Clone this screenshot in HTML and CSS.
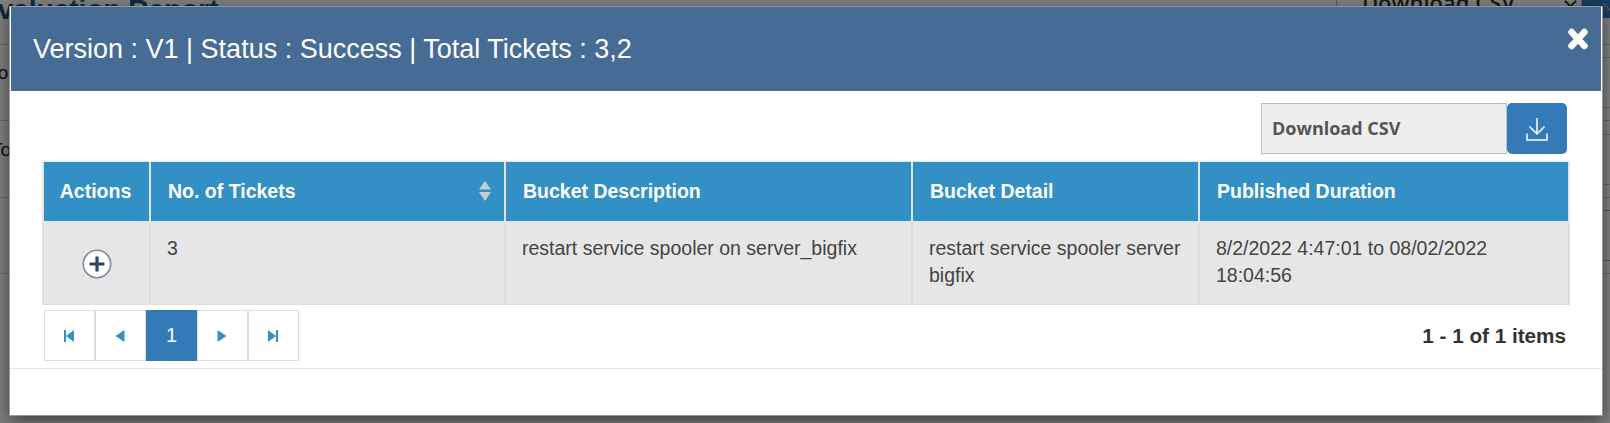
FILE: index.html
```html
<!DOCTYPE html>
<html lang="en">
<head>
<meta charset="utf-8">
<title>Evaluation Report</title>
<link rel="stylesheet" href="styles.css">
</head>
<body>
<div class="page">
  <div class="page-top">
    <h1 class="page-title">Evaluation Report</h1>
    <div class="page-tools">
      <div class="page-select">Download CSV<span class="page-chevron"></span></div>
      <div class="page-btn">
        <svg width="28" height="32" viewBox="0 0 28 32" fill="none" stroke="#9fb0c0" stroke-width="1.500"><path d="M21 17L28 24"/></svg>
      </div>
    </div>
  </div>
  <div class="page-rows">
    <div class="page-row">
      <span class="page-label page-label-a">Port</span>
      <div class="page-cell"><span class="page-cell-chevron"></span></div>
    </div>
    <div class="page-gap"></div>
    <div class="page-row">
      <span class="page-label page-label-b">Total</span>
      <div class="page-cell"><span class="page-cell-chevron"></span></div>
    </div>
    <div class="page-row page-row-last">
      <span class="page-label"></span>
      <div class="page-cell page-cell-blue"></div>
    </div>
  </div>
</div>
<div class="backdrop"></div>
<div class="modal">
  <header class="modal-head">
    <h2 class="modal-title">Version : V1 | Status : Success | Total Tickets : 3,2</h2>
    <button class="close" aria-label="Close">
      <svg width="20" height="22" viewBox="0 0 20 22" fill="none" stroke="#fff" stroke-width="6.400" stroke-linecap="round"><path d="M3.500 4L16.500 18M16.500 4L3.500 18"/></svg>
    </button>
  </header>
  <div class="modal-body">
    <div class="toolbar">
      <div class="csv-field">Download CSV</div>
      <button class="csv-btn" aria-label="Download">
        <svg width="24" height="26" viewBox="0 0 24 26" fill="none" stroke="#fff" stroke-width="1.500">
          <path d="M12 2V18M4.500 10.500L12 18L19.500 10.500"/>
          <path d="M2 17.500V24H22V17.500"/>
        </svg>
      </button>
    </div>
    <table class="grid">
      <colgroup>
        <col class="c1"><col class="c2"><col class="c3"><col class="c4"><col class="c5">
      </colgroup>
      <thead>
        <tr>
          <th class="center">Actions</th>
          <th>
            <div class="th-sort">No. of Tickets
              <svg width="14" height="20" viewBox="0 0 14 20"><path d="M7 0L13 8.500H1Z" fill="#c4ccd0"/><path d="M7 20L13 11H1Z" fill="#c4ccd0"/></svg>
            </div>
          </th>
          <th>Bucket Description</th>
          <th>Bucket Detail</th>
          <th>Published Duration</th>
        </tr>
      </thead>
      <tbody>
        <tr>
          <td class="center icon-cell">
            <svg width="30" height="30" viewBox="0 0 30 30"><circle cx="15" cy="15" r="13.700" fill="#fff" stroke="#7b8da3" stroke-width="1.600"/><path d="M15 7.500V22.500M7.500 15H22.500" stroke="#2f4563" stroke-width="3.200"/></svg>
          </td>
          <td>3</td>
          <td>restart service spooler on server_bigfix</td>
          <td>restart service spooler server bigfix</td>
          <td>8/2/2022 4:47:01 to 08/02/2022 18:04:56</td>
        </tr>
      </tbody>
    </table>
    <div class="pager-row">
      <nav class="pager">
        <a class="pg"><svg width="12" height="12" viewBox="0 0 12 12"><path d="M0 0H2V12H0ZM10 0V12L2 6Z"/></svg></a>
        <a class="pg"><svg width="12" height="12" viewBox="0 0 12 12"><path d="M9.500 0V12L.5 6Z"/></svg></a>
        <a class="pg active">1</a>
        <a class="pg"><svg width="12" height="12" viewBox="0 0 12 12"><path d="M.5 0V12L9.500 6Z"/></svg></a>
        <a class="pg"><svg width="12" height="12" viewBox="0 0 12 12"><path d="M8 0H10V12H8ZM0 0V12L8 6Z"/></svg></a>
      </nav>
      <div class="pager-info">1 - 1 of 1 items</div>
    </div>
  </div>
  <footer class="modal-foot"></footer>
</div>
</body>
</html>
```
FILE: styles.css
```css
* { box-sizing: border-box; }
html, body { margin: 0; height: 423px; overflow: hidden; }
body { background: #fff; font-family: "Liberation Sans", Arial, sans-serif; position: relative; }

.page { height: 423px; overflow: hidden; }
.page-top { height: 45px; display: flex; justify-content: space-between; border-bottom: 1px solid #ccc; }
.page-title { margin: -10px 0 0 -21px; font-size: 28px; line-height: 40px; font-weight: 700; color: #0f5a84; white-space: nowrap; }
.page-tools { display: flex; height: 44px; margin-top: -14px; }
.page-select { width: 246px; height: 36px; border: 1px solid #bbb; padding: 0 0 0 25px; font: 600 22px/30px "Open Sans", sans-serif; color: #333; position: relative; }
.page-chevron { position: absolute; right: 6px; top: 10px; width: 9px; height: 9px; border-right: 2px solid #333; border-bottom: 2px solid #333; transform: rotate(45deg); }
.page-btn { width: 28px; height: 32px; background: #2f7cc1; }
.page-btn svg { display: block; }
.page-rows { display: flex; flex-direction: column; }
.page-row { height: 76px; border-bottom: 1px solid #ccc; display: flex; justify-content: space-between; align-items: flex-start; }
.page-row-last { border-bottom-color: #ccc; }
.page-gap { height: 1px; }
.page-label { font-size: 19px; line-height: 56px; color: #222; white-space: nowrap; }
.page-label-a { margin-left: -15px; }
.page-label-b { margin-left: -9px; }
.page-cell { width: 28px; height: 51px; margin-top: 12px; border-top: 1px solid #ccc; border-bottom: 1px solid #ccc; position: relative; }
.page-cell-blue { border-color: #8fb3d0; }
.page-cell-chevron { position: absolute; left: 5px; top: 16px; width: 8px; height: 8px; border-right: 2px solid #222; border-bottom: 2px solid #222; transform: rotate(45deg); }

.backdrop { position: absolute; inset: 0; background: rgba(0, 0, 0, .5); }

.modal { position: absolute; left: 9px; top: 6px; width: 1594px; height: 410px; background: #fff; border: 1px solid rgba(0, 0, 0, .4); box-shadow: 0 5px 15px rgba(0, 0, 0, .5); display: flex; flex-direction: column; }
.modal-head { height: 84px; flex: none; margin: 0 0 0 1px; width: 1590px; background: #466b94; color: #fff; display: flex; justify-content: space-between; padding: 0 13px 0 22px; }
.modal-title { margin: 27px 0 0; font-size: 27px; line-height: 30px; font-weight: 400; }
.close { background: none; border: 0; padding: 0; width: 20px; height: 22px; margin-top: 21px; }
.close svg { display: block; }

.modal-body { flex: none; padding: 12px 33px 0 32px; }
.toolbar { display: flex; justify-content: flex-end; height: 51px; margin-right: 2px; margin-bottom: 7px; }
.csv-field { width: 246px; height: 51px; background: #eee; border: 1px solid #a9c4d0; padding: 0 10px; font: 700 18px/49px "Open Sans", sans-serif; color: #555; }
.csv-btn { width: 60px; height: 51px; background: #337ab7; border: 0; border-radius: 5px; padding: 0; display: flex; align-items: center; justify-content: center; }

.grid { width: 1526px; table-layout: fixed; border-collapse: collapse; font-size: 19.5px; color: #444; }
.c1 { width: 107px; } .c2 { width: 355px; } .c3 { width: 407px; } .c4 { width: 287px; } .c5 { width: 370px; }
.grid th { height: 60px; background: #3290c4; color: #fff; font-size: 19.5px; font-weight: 700; text-align: left; padding: 0 17px; border: 2px solid #e0e6e9; border-width: 1px 2px 2px 2px; }
.grid td { height: 83px; background: #e6e6e6; border: 2px solid #dedede; border-width: 0 2px 1px; vertical-align: top; padding: 12.5px 16px 0; line-height: 27px; }
.grid .center { text-align: center; padding-left: 0; padding-right: 0; }
.grid th.center { padding-right: 2px; }
.grid .icon-cell { vertical-align: middle; padding-top: 2px; }
.icon-cell svg { display: block; margin: 0 auto; }
.th-sort { display: flex; justify-content: space-between; align-items: center; margin-right: -5px; }

.pager-row { display: flex; justify-content: space-between; align-items: center; margin-top: 5px; padding-left: 2px; }
.pager { display: flex; }
.pg { width: 51px; height: 51px; border: 1px solid #ddd; display: flex; align-items: center; justify-content: center; background: #fff; color: #fff; font-size: 20px; }
.pg svg { fill: #3290c4; }
.pg.active { background: #337ab7; border-color: #337ab7; }
.pager-info { font-size: 20.7px; font-weight: 700; color: #333; margin-right: 3px; }

.modal-foot { margin-top: 7px; border-top: 1px solid #e5e5e5; flex: 1; }
```
